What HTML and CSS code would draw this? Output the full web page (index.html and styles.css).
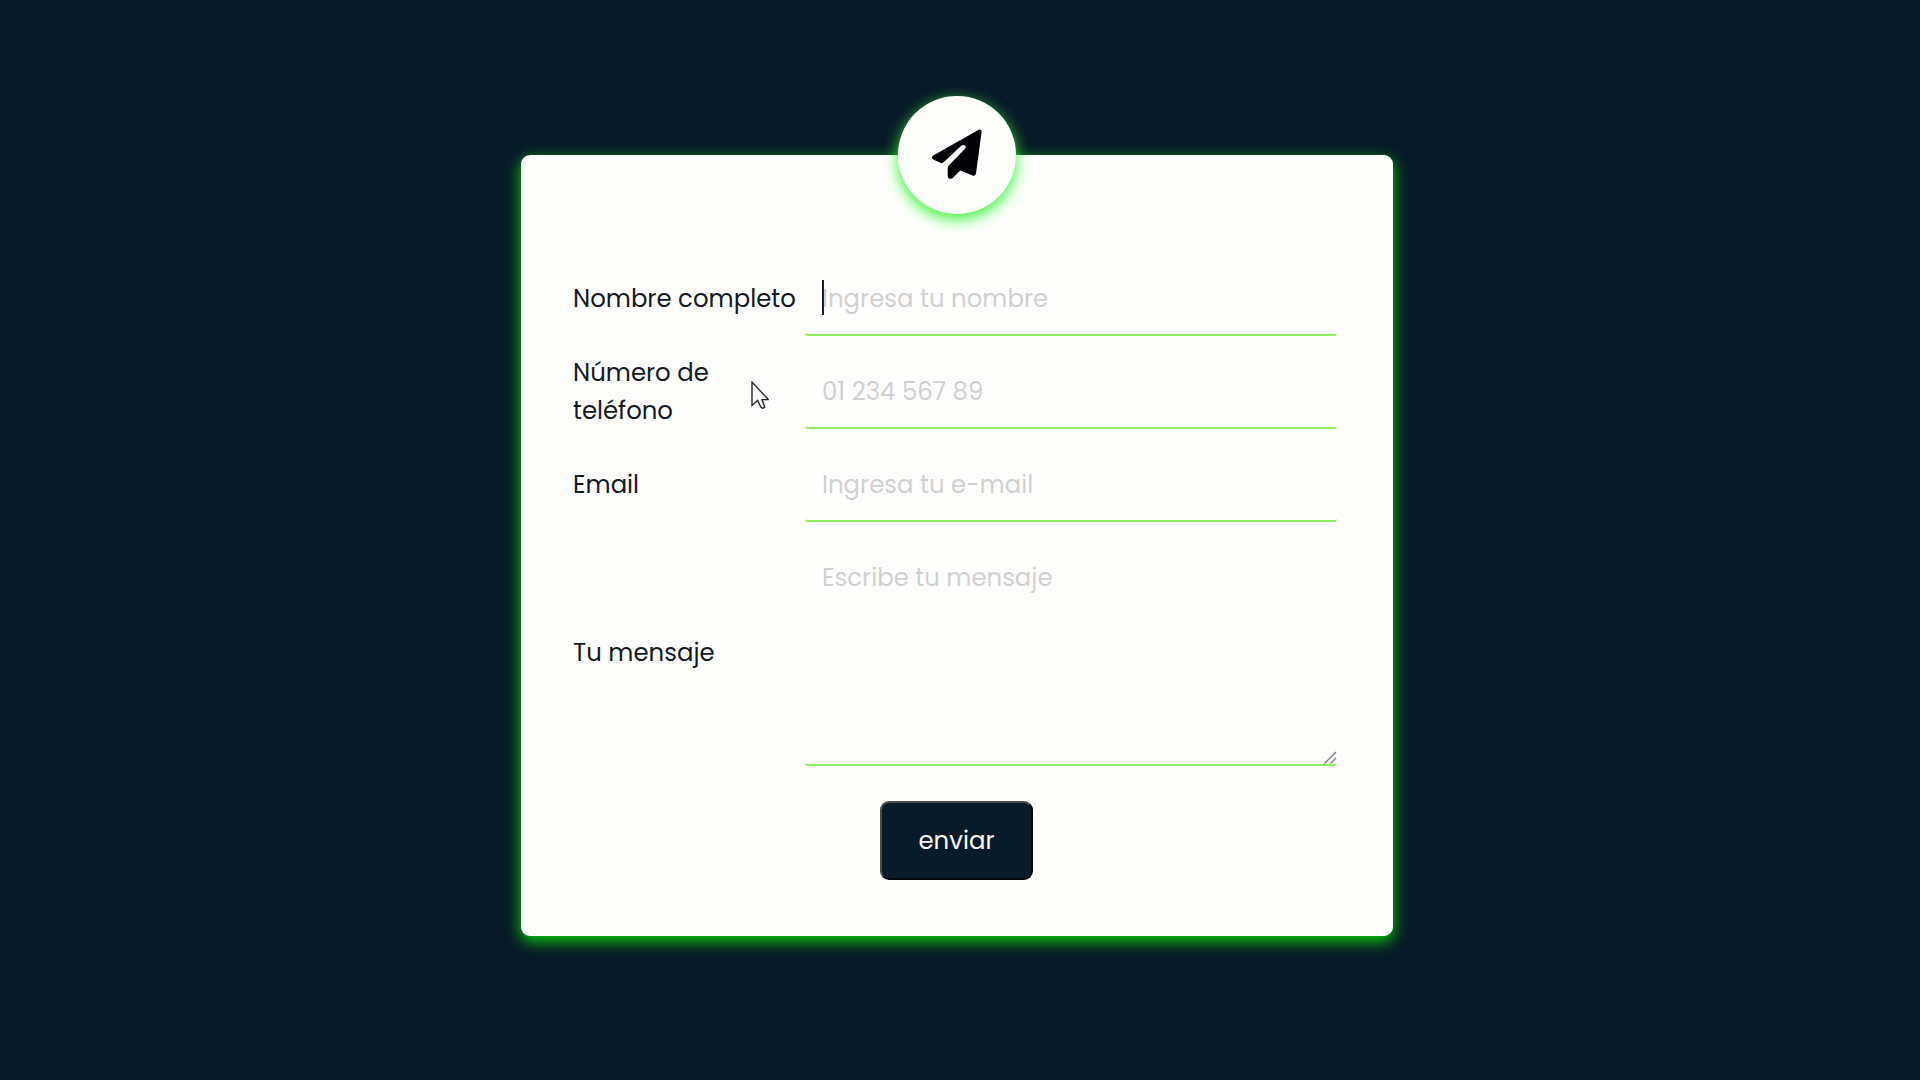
FILE: index.html
```
<!DOCTYPE html>
<html lang="es">
<head>
<meta charset="utf-8">
<title>Contacto</title>
<link rel="stylesheet" href="styles.css">
</head>
<body>
<form class="card">
  <div class="badge">
    <svg class="plane" viewBox="0 0 50 50" aria-hidden="true"><path d="M.8 26.8 46.8.7Q49.8-.5 49.6 3L44 44.5Q43.3 47.5 40.5 46.6L28.2 41.5 20.8 49Q18.8 50.6 16.6 49.2 15.7 48.6 15.7 47V39.5Q15.7 38 16.8 36.5L33.3 19.5Q34.2 17.2 33 16.5 31.6 15.4 29.5 16.6L11.6 33.3Q10.4 34.7 8.8 33.9L1.7 30.8Q-1.3 29 .8 26.8Z"/></svg>
  </div>
  <div class="row">
    <label class="label" for="name">Nombre completo</label>
    <div class="control">
      <input class="field" id="name" type="text" placeholder="Ingresa tu nombre">
      <span class="caret"></span>
    </div>
  </div>
  <div class="row">
    <label class="label" for="phone">Número de<br>teléfono</label>
    <div class="control"><input class="field" id="phone" type="tel" placeholder="01 234 567 89"></div>
  </div>
  <div class="row">
    <label class="label" for="email">Email</label>
    <div class="control"><input class="field" id="email" type="email" placeholder="Ingresa tu e-mail"></div>
  </div>
  <div class="row">
    <label class="label" for="message">Tu mensaje</label>
    <div class="control">
      <textarea class="field field-message" id="message" placeholder="Escribe tu mensaje"></textarea>
      <svg class="grip" viewBox="0 0 13 13" aria-hidden="true"><path d="M.5 12.5 12 1M6.5 12.5 12 7"/></svg>
    </div>
  </div>
  <button class="submit" type="button">enviar</button>
</form>
<svg class="pointer" viewBox="0 0 18 28" aria-hidden="true"><path d="M1 1V24.5L6.6 19.5 10 26.3Q11.6 28 13.8 26.3L11 18.6H17.3Z"/></svg>
</body>
</html>
```
FILE: styles.css
```
* { box-sizing: border-box; }
body {
  margin: 0;
  height: 1080px;
  padding: 155px 0 0 521px;
  overflow: hidden;
  background: #091a28;
  font-family: "Poppins", "Inter", sans-serif;
  font-size: 24.4px;
  line-height: 37.5px;
}
.card {
  position: relative;
  display: flex;
  flex-direction: column;
  gap: 17px;
  width: 872px;
  height: 781px;
  padding: 105px 56px 0 52px;
  border-radius: 9px;
  background: #fefffd;
  box-shadow: 0 5px 15px #06d806;
}
.badge {
  position: absolute;
  top: -59px;
  left: 376.5px;
  display: flex;
  align-items: center;
  justify-content: center;
  width: 118px;
  height: 118px;
  border-radius: 50%;
  background: #fefffd;
  box-shadow: 0 5px 15px #35f335;
}
.plane { width: 50px; height: 50px; margin-top: -2px; fill: #020207; }
.row { display: flex; align-items: center; }
.label { width: 232px; padding-top: 1px; color: #15181d; white-space: nowrap; }
.control { position: relative; display: flex; flex: 1; }
.field {
  width: 100%;
  height: 76px;
  padding: 2px 17px 0;
  border: 0;
  border-bottom: 2px solid #92ee60;
  border-radius: 3px;
  outline: 0;
  background: transparent;
  color: #15181d;
  font: inherit;
}
.field::placeholder { color: #d3cfd1; opacity: 1; }
.field-message { height: 227px; padding-top: 20px; resize: none; }
.grip {
  position: absolute;
  right: 0;
  bottom: 2px;
  width: 13px;
  height: 13px;
  fill: none;
  stroke: #75777a;
  stroke-width: 1.3;
}
.caret {
  position: absolute;
  top: 20px;
  left: 17px;
  width: 1.5px;
  height: 35px;
  background: #14202b;
}
.submit {
  align-self: center;
  width: 153px;
  height: 79px;
  margin: 18px 0 0 3px;
  padding: 0;
  border: 2.5px solid;
  border-color: #4b4b4b #050608 #050608 #4b4b4b;
  border-radius: 9px;
  background: #091a28;
  color: #fafcff;
  font: inherit;
}
.pointer {
  position: absolute;
  top: 380.5px;
  left: 750.5px;
  width: 18px;
  height: 28px;
  fill: #fefffd;
  stroke: #25282d;
  stroke-width: 1.4;
}
```
